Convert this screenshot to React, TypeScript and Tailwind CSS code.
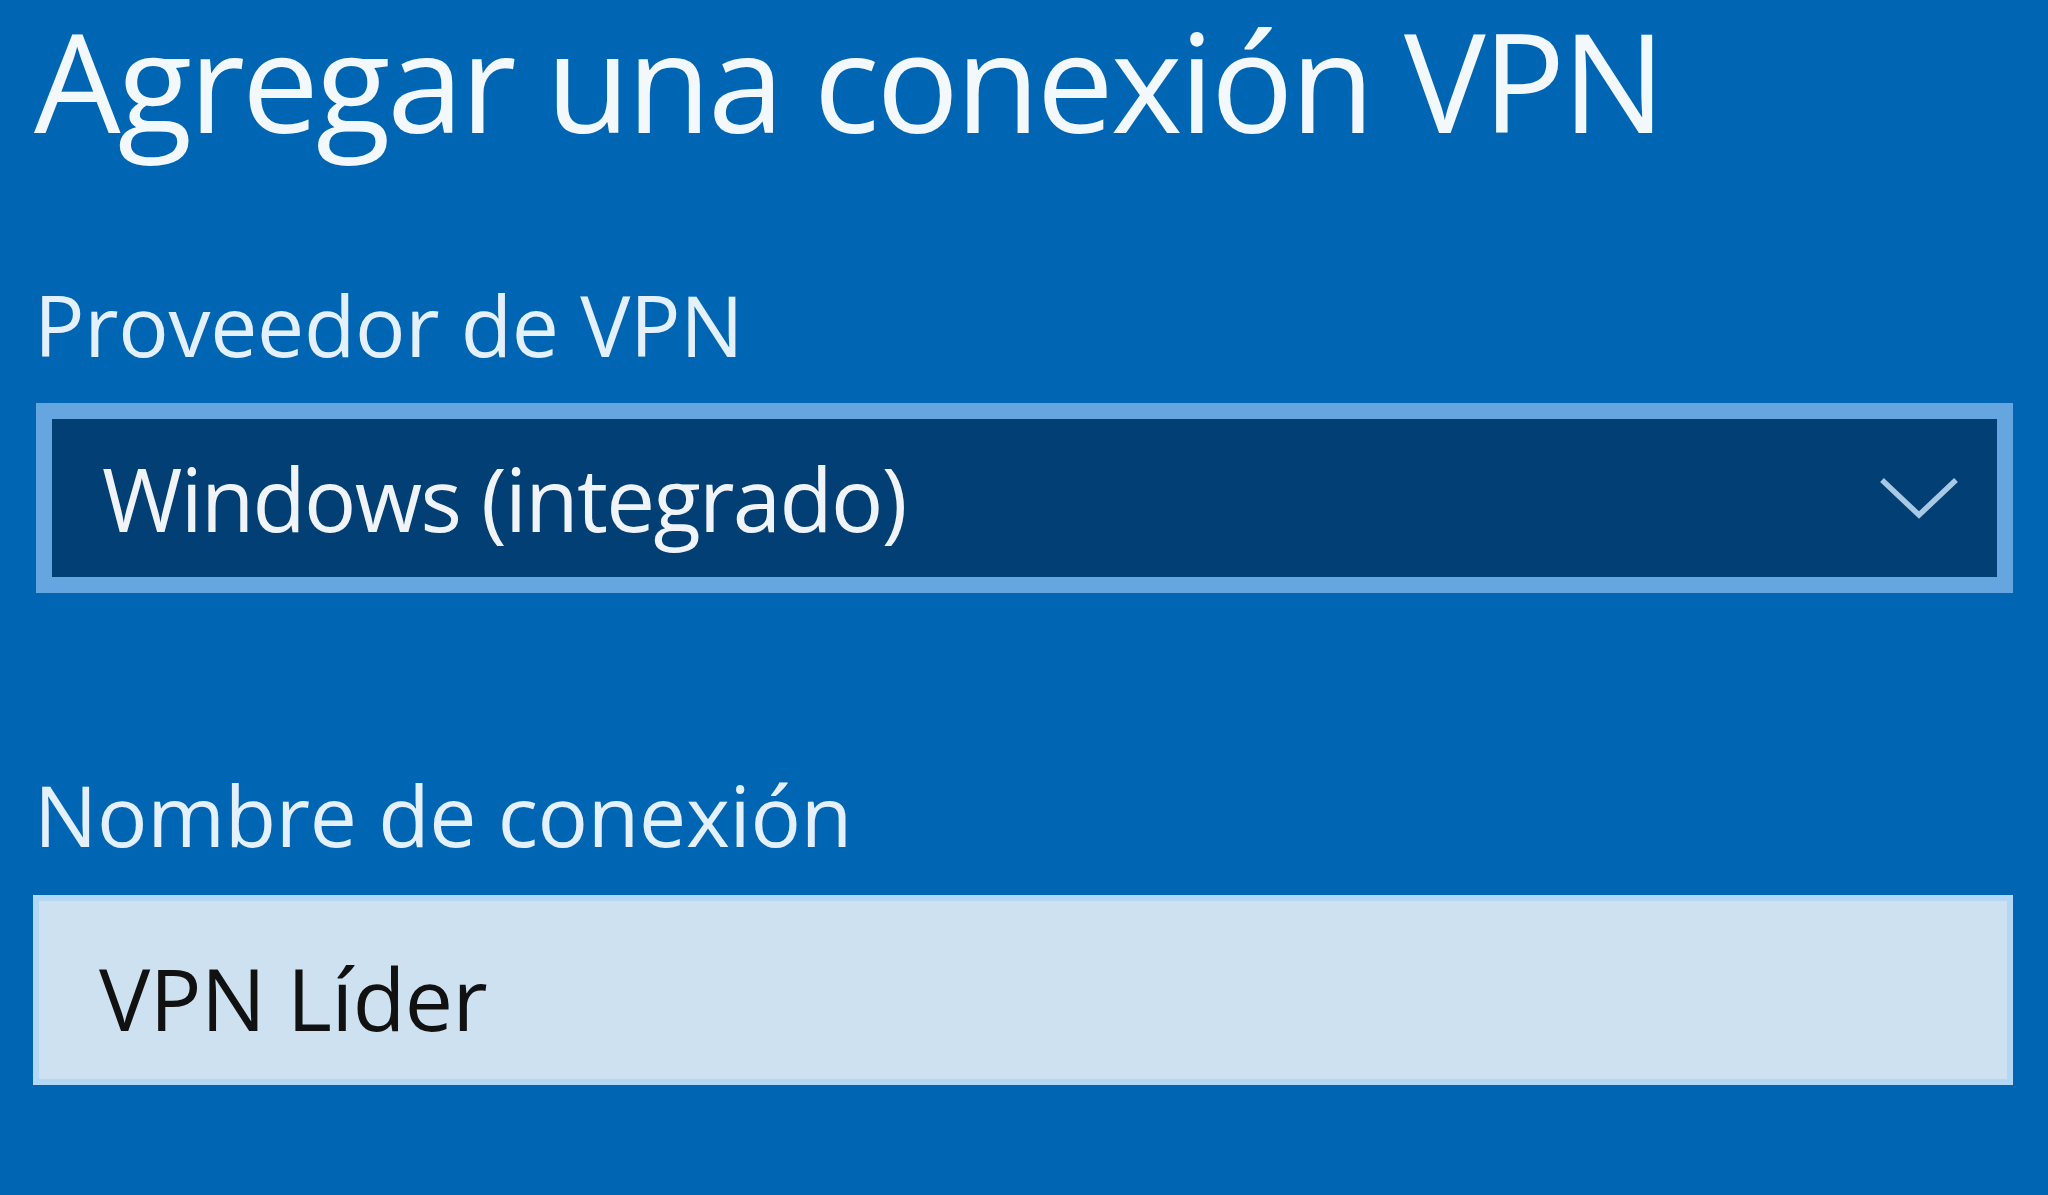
export default function App() {
  return (
    <div
      className="flex h-[1195px] w-[2048px] flex-col overflow-hidden bg-[#0066b3] pl-[33px]"
      style={{ fontFamily: '"Open Sans", "Noto Sans", sans-serif' }}
    >
      <h1 className="ml-[1px] text-[137px] font-normal leading-[160px] tracking-[-3px] text-[#f3f8fd]">
        Agregar una conexión VPN
      </h1>

      <label className="ml-[1px] mt-[123px] text-[84px] leading-[84px] tracking-[-0.3px] text-[#e4f0fb]">
        Proveedor de VPN
      </label>

      <div className="ml-[3px] mt-[36px] flex h-[190px] w-[1977px] items-center justify-between border-[16px] border-[#66a6e0] bg-[#023f74] pl-[50px] pr-[39px]">
        <span className="text-[87px] leading-[87px] tracking-[-1.7px] text-[#f0f4f8]">
          Windows (integrado)
        </span>
        <svg width="78" height="44" viewBox="0 0 78 44" fill="none" className="mt-[2px]">
          <polyline
            points="4,5 39,38 74,5"
            stroke="#a9c8e4"
            strokeWidth="5.5"
            strokeLinecap="square"
          />
        </svg>
      </div>

      <label className="ml-[1px] mt-[180px] text-[84px] leading-[84px] tracking-[-0.3px] text-[#e4f0fb]">
        Nombre de conexión
      </label>

      <div className="mt-[38px] flex h-[190px] w-[1980px] items-center border-[6px] border-[#b3d8f6] bg-[#cde1f0] pl-[60px] pt-[16px]">
        <span className="text-[86px] leading-[86px] tracking-[-0.5px] text-[#111]">VPN Líder</span>
      </div>
    </div>
  );
}
